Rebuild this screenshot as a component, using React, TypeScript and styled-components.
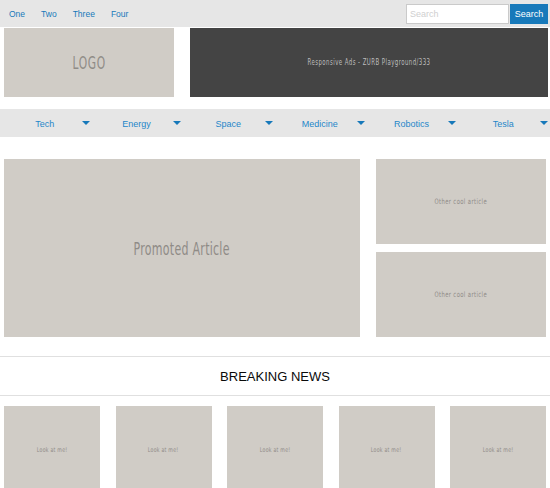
import React from "react";
import styled, { createGlobalStyle } from "styled-components";

const Global = createGlobalStyle`
  html, body { margin: 0; padding: 0; background: #fff; }
  body { font-family: "Liberation Sans", Arial, sans-serif; overflow: hidden; }
  * { box-sizing: border-box; }
`;

const placeholderFont = `"DejaVu Sans Condensed", "Liberation Sans", sans-serif`;

const TopBar = styled.header`
  height: 27px;
  background: #e6e6e6;
  display: flex;
  align-items: center;
  justify-content: space-between;
  padding: 0 2px 0 9px;
`;

const Menu = styled.nav`
  display: flex;
  gap: 16px;
  align-items: center;
`;

const MenuLink = styled.a`
  font-size: 8.5px;
  color: #1779ba;
  text-decoration: none;
`;

const SearchForm = styled.form`
  display: flex;
  gap: 1px;
  height: 20px;
  margin: 0;
`;

const SearchInput = styled.input`
  width: 103px;
  height: 20px;
  border: 1px solid #cacaca;
  background: #fff;
  font-size: 9px;
  font-family: "Liberation Sans", Arial, sans-serif;
  padding: 0 3px;
  outline: none;
  &::placeholder { color: #cfcfcf; }
`;

const SearchButton = styled.button`
  width: 38px;
  height: 20px;
  border: none;
  background: #1779ba;
  color: #fff;
  font-size: 9px;
  font-family: "Liberation Sans", Arial, sans-serif;
  padding: 0;
`;

const HeaderRow = styled.section`
  display: grid;
  grid-template-columns: 170px 1fr;
  gap: 16px;
  padding: 1px 2px 0 4px;
`;

const Placeholder = styled.div<{ $dark?: boolean; $h: number }>`
  height: ${(p) => p.$h}px;
  background: ${(p) => (p.$dark ? "#444444" : "#d0ccc6")};
  display: flex;
  align-items: center;
  justify-content: center;
  overflow: hidden;
`;

const PlaceholderText = styled.span<{ $size: number; $color?: string; $spacing?: number; $scale: number }>`
  display: inline-block;
  font-family: ${placeholderFont};
  font-size: ${(p) => p.$size}px;
  color: ${(p) => p.$color ?? "#8e8b86"};
  letter-spacing: ${(p) => p.$spacing ?? 0}px;
  white-space: nowrap;
  transform: scaleX(${(p) => p.$scale});
`;

const CategoryBar = styled.nav`
  margin-top: 12px;
  height: 28px;
  background: #e6e6e6;
  display: grid;
  grid-template-columns: repeat(6, 1fr);
`;

const Category = styled.a`
  display: grid;
  grid-template-columns: 1fr auto 1fr;
  align-items: center;
  padding-right: 2px;
  font-size: 9px;
  color: #1f86c9;
  text-decoration: none;
`;

const CategoryLabel = styled.span`
  grid-column: 2;
  padding-top: 1px;
`;

const Caret = styled.span`
  grid-column: 3;
  justify-self: end;
  width: 0;
  height: 0;
  border-left: 4px solid transparent;
  border-right: 4px solid transparent;
  border-top: 4px solid #1779ba;
`;

const MainGrid = styled.section`
  margin-top: 22px;
  display: grid;
  grid-template-columns: 356px 170px;
  gap: 16px;
  padding: 0 4px;
`;

const SideColumn = styled.div`
  display: flex;
  flex-direction: column;
  gap: 8px;
`;

const SectionTitle = styled.h2`
  margin: 19px 0 0;
  height: 40px;
  border-top: 1px solid #e0e0e0;
  border-bottom: 1px solid #e0e0e0;
  display: flex;
  align-items: center;
  justify-content: center;
  font-family: "Liberation Sans", Arial, sans-serif;
  font-weight: normal;
  font-size: 13px;
  color: #0a0a0a;
`;

const CardRow = styled.section`
  margin-top: 10px;
  display: grid;
  grid-template-columns: repeat(5, 1fr);
  gap: 15.5px;
  padding: 0 4px;
`;

const menu = ["One", "Two", "Three", "Four"];
const categories = ["Tech", "Energy", "Space", "Medicine", "Robotics", "Tesla"];

export default function App() {
  return (
    <>
      <Global />
      <TopBar>
        <Menu>
          {menu.map((m) => (
            <MenuLink key={m} href="#">{m}</MenuLink>
          ))}
        </Menu>
        <SearchForm onSubmit={(e) => e.preventDefault()}>
          <SearchInput placeholder="Search" />
          <SearchButton type="submit">Search</SearchButton>
        </SearchForm>
      </TopBar>
      <HeaderRow>
        <Placeholder $h={69}>
          <PlaceholderText $size={18} $color="#8f8b86" $spacing={1} $scale={0.66}>LOGO</PlaceholderText>
        </Placeholder>
        <Placeholder $dark $h={69}>
          <PlaceholderText $size={8} $color="#bdbdbd" $spacing={0.6} $scale={0.75}>
            Responsive Ads - ZURB Playground/333
          </PlaceholderText>
        </Placeholder>
      </HeaderRow>
      <CategoryBar>
        {categories.map((c) => (
          <Category key={c} href="#">
            <CategoryLabel>{c}</CategoryLabel>
            <Caret />
          </Category>
        ))}
      </CategoryBar>
      <MainGrid>
        <Placeholder $h={178}>
          <PlaceholderText $size={18} $color="#8f8b86" $spacing={0.4} $scale={0.68}>Promoted Article</PlaceholderText>
        </Placeholder>
        <SideColumn>
          <Placeholder $h={85}>
            <PlaceholderText $size={7.5} $color="#8f8b86" $spacing={0.5} $scale={0.78}>Other cool article</PlaceholderText>
          </Placeholder>
          <Placeholder $h={85}>
            <PlaceholderText $size={7.5} $color="#8f8b86" $spacing={0.5} $scale={0.78}>Other cool article</PlaceholderText>
          </Placeholder>
        </SideColumn>
      </MainGrid>
      <SectionTitle>BREAKING NEWS</SectionTitle>
      <CardRow>
        {[0, 1, 2, 3, 4].map((i) => (
          <Placeholder key={i} $h={88}>
            <PlaceholderText $size={6.5} $color="#8f8b86" $spacing={0.3} $scale={0.8}>Look at me!</PlaceholderText>
          </Placeholder>
        ))}
      </CardRow>
    </>
  );
}
